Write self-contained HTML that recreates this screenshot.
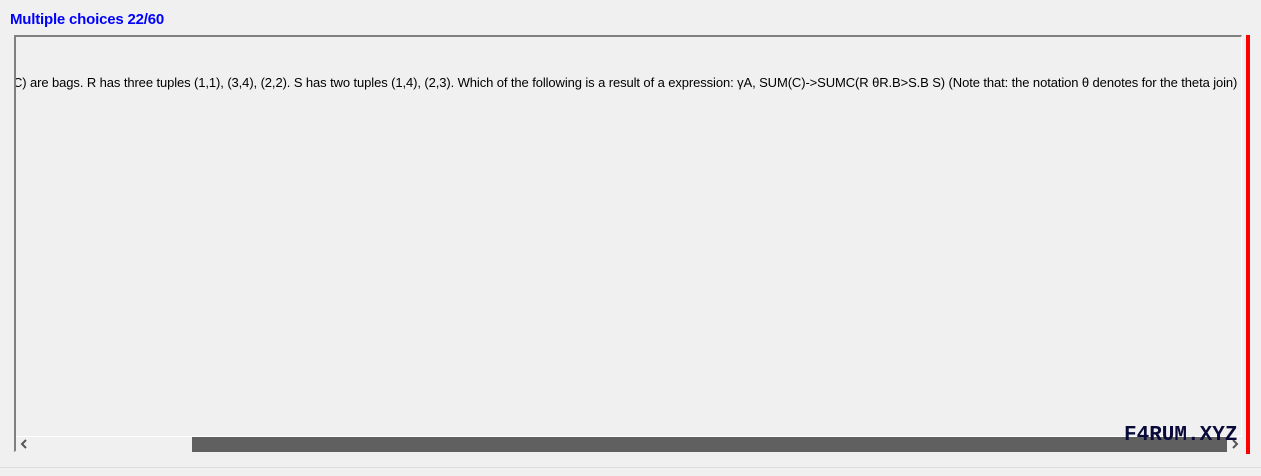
<!DOCTYPE html>
<html><head><style>
body{margin:0;width:1261px;height:476px;background:#f0f0f0;position:relative;overflow:hidden;font-family:"Liberation Sans",Arial,sans-serif}
.t{position:absolute;left:10px;top:11px;font-size:15px;font-weight:bold;color:#0000ff;letter-spacing:-0.2px}
.box{position:absolute;left:14px;top:35px;width:1228px;height:417px;border-top:2px solid #808080;border-left:2px solid #808080;border-right:1px solid #fff;border-bottom:1px solid #fff;box-sizing:border-box;overflow:hidden}
.txt{position:absolute;left:-3px;top:38px;font-size:13px;color:#000;white-space:nowrap;letter-spacing:-0.1px}
.sb{position:absolute;left:16px;top:436px;width:1226px;height:16px;background:#f0f0f0;border-top:1px solid #fff}
.th{position:absolute;left:192px;top:437px;width:1035px;height:15px;background:#606060}
.red{position:absolute;left:1246px;top:35px;width:4px;height:419px;background:#ff0000}
.wm{position:absolute;left:1124px;top:424px;font-family:"Liberation Mono",monospace;font-size:21px;color:#0a0a3a;font-weight:bold}
.line{position:absolute;left:0;top:467px;width:1261px;height:1px;background:#dcdcdc}
</style></head><body>
<div class="t">Multiple choices 22/60</div>
<div class="box"><div class="txt">C) are bags. R has three tuples (1,1), (3,4), (2,2). S has two tuples (1,4), (2,3). Which of the following is a result of a expression: γA, SUM(C)-&gt;SUMC(R θR.B&gt;S.B S) (Note that: the notation θ denotes for the theta join)</div></div>
<div class="sb"></div>
<div class="th"></div>
<svg style="position:absolute;left:20px;top:439px" width="8" height="10"><path d="M6 1 L2 5 L6 9" stroke="#555" stroke-width="2" fill="none"/></svg>
<svg style="position:absolute;left:1231px;top:439px" width="8" height="10"><path d="M2 1 L6 5 L2 9" stroke="#555" stroke-width="2" fill="none"/></svg>
<div class="red"></div>
<div class="wm">F4RUM.XYZ</div>
<div class="line"></div>
</body></html>
